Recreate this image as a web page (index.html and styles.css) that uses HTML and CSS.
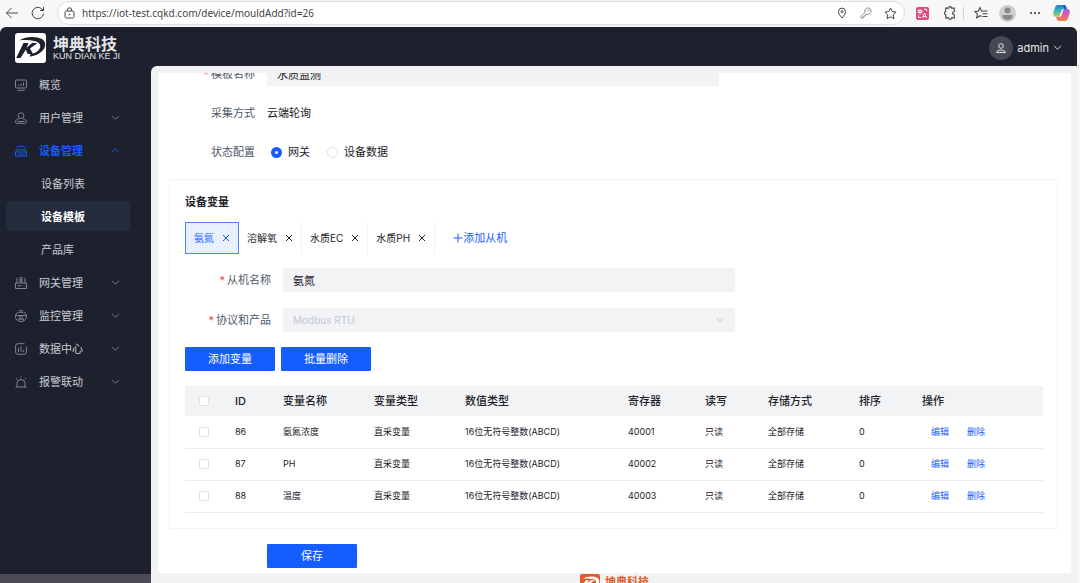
FILE: index.html
```html
<!DOCTYPE html>
<html lang="zh-CN">
<head>
    <meta charset="UTF-8">
    <meta name="viewport" content="width=device-width, initial-scale=1.0">
    <title>设备模板</title>
    <link rel="stylesheet" href="styles.css">
</head>
<body>
    <!-- Shared shapes -->
    <svg class="defs" aria-hidden="true">
        <symbol id="down" viewBox="0 0 10 10"><path d="M1.2 3.2 5 7l3.8-3.8"/></symbol>
        <symbol id="up" viewBox="0 0 10 10"><path d="M1.2 6.8 5 3l3.8 3.8"/></symbol>
        <symbol id="close" viewBox="0 0 8 8"><path d="m1 1 6 6M7 1 1 7"/></symbol>
        <symbol id="mark" viewBox="0 0 31 30">
            <path d="M4 7.500C11 3 21 3 27 6c5.500 3.500 3.500 11-3 14.500-3 1.800-6 2.700-9.500 3l1-2.300c4-.7 7.500-2.500 9.200-5.700 1.800-3.500-.5-6.700-5.700-7.500C15 7.200 9 6.500 4 7.500z"/>
            <path d="M8.500 10h5l-2 4.700L17 10h5.500L15 15.500l3 5.500h-5.300l-1.900-4.300L5.500 25H1.200z"/>
        </symbol>
    </svg>

    <!-- Browser bar -->
    <div class="browser">
        <button class="nav-btn" aria-label="后退"><svg width="14" height="14" viewBox="0 0 14 14"><path d="M13 7H1.500M6.500 2 1.500 7l5 5"/></svg></button>
        <button class="nav-btn" aria-label="刷新"><svg width="14" height="14" viewBox="0 0 14 14"><path d="M12.500 7.500A5.700 5.700 0 1 1 10.800 3L12.500 4.500M12.500 1v3.500H9"/></svg></button>
        <div class="address">
            <svg width="11" height="12" viewBox="0 0 11 12"><rect x="1" y="4" width="9" height="7" rx="1.500"/><path d="M3.300 4V3a2.200 2.200 0 0 1 4.400 0v1"/><circle cx="5.500" cy="7.500" r=".5"/></svg>
            <input type="text" aria-label="地址" value="https://iot-test.cqkd.com/device/mouldAdd?id=26">
            <button aria-label="位置"><svg width="10" height="12" viewBox="0 0 10 12"><path d="M5 11C3 8.700 1.500 6.800 1.500 4.600a3.500 3.500 0 0 1 7 0C8.500 6.800 7 8.700 5 11z"/><circle cx="5" cy="4.600" r="1"/></svg></button>
            <button aria-label="密码"><svg class="faint" width="12" height="12" viewBox="0 0 12 12"><path d="M5 5.500A3.200 3.200 0 1 1 7 7.200L6 8H5v1H4v1H3v1H1V9.500z"/><circle cx="8.700" cy="3.300" r=".4"/></svg></button>
            <button aria-label="收藏"><svg width="13" height="13" viewBox="0 0 13 13"><path d="m6.500 1 1.700 3.600 3.900.5-2.800 2.700.7 3.900-3.500-1.900L3 11.700l.7-3.900L.9 5.100l3.900-.5z"/></svg></button>
        </div>
        <div class="tools">
            <button aria-label="翻译">
                <svg width="13" height="13" viewBox="0 0 13 13"><rect width="13" height="13" rx="2" fill="#e2497f" stroke="none"/><g stroke="#fff"><path d="M2 3.500h4v2H2zM4 2v5.500M6.500 11l2-5 2 5M7.300 9.500h2.400M8 2.200h2.500v2M2.500 8.500v2H5"/></g></svg>
            </button>
            <button aria-label="扩展"><svg width="14" height="14" viewBox="0 0 13 13"><path d="M2.500 2h2.700a1.400 1.400 0 0 1 2.800 0h2.500v3a.6.600 0 0 1-.6.600 1.100 1.100 0 0 0 0 2.200.6.600 0 0 1 .6.600V11H8a1.400 1.400 0 0 1-2.800 0H2.500V7.900a1.300 1.300 0 0 1 0-2.600z"/></svg></button>
            <span class="sep"></span>
            <button aria-label="收藏夹"><svg width="14" height="14" viewBox="0 0 13 13"><path d="M7 9.800 5.500 9 2.500 11l.6-3.600L.8 5.200 4 4.700 5.500 1.500 7 4.700h5.500M8 7.200h4.500M8 9.700h4.500"/></svg></button>
            <button aria-label="个人资料"><svg class="solid" width="17" height="17" viewBox="0 0 17 17"><circle cx="8.500" cy="8.500" r="8.500" fill="#cfcdcb"/><circle cx="8.500" cy="5.500" r="3" fill="#8a8886"/><path d="M3.500 10h10v1.200c0 5-10 5-10 0z" fill="#8a8886"/></svg></button>
            <button aria-label="更多"><svg class="solid" width="12" height="4" viewBox="0 0 12 4"><g fill="#333"><circle cx="2" cy="2" r="1"/><circle cx="6" cy="2" r="1"/><circle cx="10" cy="2" r="1"/></g></svg></button>
            <button aria-label="Copilot">
                <svg class="solid" width="17" height="16" viewBox="0 0 17 16">
                    <defs>
                        <linearGradient id="cool" x1="0" y1="0" x2="0" y2="1"><stop offset="0" stop-color="#1c7fd8"/><stop offset=".5" stop-color="#2fb9c6"/><stop offset="1" stop-color="#e3c936"/></linearGradient>
                        <linearGradient id="warm" x1="0" y1="0" x2="0" y2="1"><stop offset="0" stop-color="#9c5ae8"/><stop offset=".5" stop-color="#e75a9c"/><stop offset="1" stop-color="#f58547"/></linearGradient>
                    </defs>
                    <path d="M5 0h6c1.500 0 2 1 2.400 2.500L13.700 4H11C9 4 8.500 5 8 7l-1 3c-.5 1.500-1 2-2.500 2H3C.5 12-.2 10 .4 7.500L2 2.500C2.600.8 3.500 0 5 0z" fill="url(#cool)"/>
                    <path d="M12 16H6c-1.500 0-2-1-2.400-2.500L3.300 12H6c2 0 2.500-1 3-3l1-3c.5-1.500 1-2 2.500-2H14c2.500 0 3.200 2 2.600 4.500l-1.600 5c-.6 1.700-1.500 2.500-3 2.500z" fill="url(#warm)"/>
                    <path d="M10 0h1c1.500 0 2 1 2.400 2.500l.3 1.500H11z" fill="#2359c4"/>
                </svg>
            </button>
        </div>
    </div>

    <div class="app">
        <header class="header">
            <div class="brand">
                <svg class="brand-mark" width="31" height="30"><use href="#mark"/></svg>
                <div class="brand-text">
                    <span class="brand-cn">坤典科技</span>
                    <span class="brand-en">KUN DIAN KE JI</span>
                </div>
            </div>
            <button class="user">
                <span class="avatar"><svg width="12" height="12" viewBox="0 0 12 12"><circle cx="6" cy="4" r="2.300"/><path d="M1.500 10.500c0-3.200 9-3.200 9 0z"/></svg></span>
                admin
                <svg width="9" height="9"><use href="#down"/></svg>
            </button>
        </header>

        <div class="body">
            <nav class="sidebar">
                <button class="menu-item">
                    <svg width="12" height="12" viewBox="0 0 12 12"><rect x=".5" y="1" width="11" height="8" rx="1"/><path d="M3.500 5.500V7M6 4.500V7M8.500 3.500V7M2.500 11.300h7"/></svg>
                    <span>概览</span>
                </button>
                <button class="menu-item">
                    <svg width="12" height="12" viewBox="0 0 12 12"><circle cx="6" cy="3.700" r="2.900"/><path d="M4 6.800C1.500 7.200.5 8.500.5 10c0 1 .5 1.300 1.300 1.300h8.400c.8 0 1.300-.3 1.300-1.300 0-1.500-1-2.800-3.500-3.200M2.500 9.500h7"/></svg>
                    <span>用户管理</span>
                    <svg class="arrow" width="9" height="9"><use href="#down"/></svg>
                </button>
                <button class="menu-item open">
                    <svg width="12" height="12" viewBox="0 0 12 12"><path d="M1.500 3c2-2.300 7-2.300 9 0M2 4.700h8L11.500 7v4H.5V7zM.5 7h11M2.700 9.200h1.600M5.500 8.300v1.800M7.200 9.200h2.300"/></svg>
                    <span>设备管理</span>
                    <svg class="arrow" width="9" height="9"><use href="#up"/></svg>
                </button>
                <button class="menu-item sub"><span>设备列表</span></button>
                <button class="menu-item sub active"><span>设备模板</span></button>
                <button class="menu-item sub"><span>产品库</span></button>
                <button class="menu-item">
                    <svg width="12" height="12" viewBox="0 0 12 12"><path d="M.5 6h11v5.500H.5zM2 6V.8M10 6V.8M4 .8h4M4.500 2.500h3M6 2.500V6M4 4h4M2.500 8.800h4M8.500 8.800h1"/></svg>
                    <span>网关管理</span>
                    <svg class="arrow" width="9" height="9"><use href="#down"/></svg>
                </button>
                <button class="menu-item">
                    <svg width="12" height="12" viewBox="0 0 12 12"><path d="M4 .7h4M3.500 2.300h5M.5 5.500h11M3 2.300C-.3 4-.3 8 2 10c2 2 6 2 8 0s2.300-6-1-7.700M3.500 10.500V9h5v1.500"/><circle cx="6" cy="7.300" r="1.500"/></svg>
                    <span>监控管理</span>
                    <svg class="arrow" width="9" height="9"><use href="#down"/></svg>
                </button>
                <button class="menu-item">
                    <svg width="12" height="12" viewBox="0 0 12 12"><path d="M9.500.7H3A2.300 2.300 0 0 0 .6 3v6A2.300 2.300 0 0 0 3 11.300h6A2.300 2.300 0 0 0 11.400 9V3.500M3.500 5v4M6 3.500V9M8.300 7v2"/></svg>
                    <span>数据中心</span>
                    <svg class="arrow" width="9" height="9"><use href="#down"/></svg>
                </button>
                <button class="menu-item">
                    <svg width="12" height="12" viewBox="0 0 12 12"><path d="M.5 11h11M2 11V7.500a4 4 0 0 1 8 0V11M6 .5v1.300M1 2.300l1.300 1.200M11 2.300 9.700 3.500"/></svg>
                    <span>报警联动</span>
                    <svg class="arrow" width="9" height="9"><use href="#down"/></svg>
                </button>
                <div class="sidebar-foot"></div>
            </nav>

            <main class="main">
                <div class="panel">
                    <form class="form scrolled">
                        <div class="row">
                            <label for="tplName" class="required">模板名称</label>
                            <input type="text" id="tplName" class="field" value="水质监测" readonly>
                        </div>
                        <div class="row">
                            <span class="label">采集方式</span>
                            <span class="value">云端轮询</span>
                        </div>
                        <div class="row">
                            <span class="label">状态配置</span>
                            <div class="radios">
                                <label><input type="radio" name="status" checked>网关</label>
                                <label><input type="radio" name="status">设备数据</label>
                            </div>
                        </div>
                    </form>

                    <!-- Device variables -->
                    <section class="card">
                        <h2>设备变量</h2>
                        <div class="tabs">
                            <button class="tab current">氨氮<svg width="8" height="8"><use href="#close"/></svg></button>
                            <button class="tab">溶解氧<svg width="8" height="8"><use href="#close"/></svg></button>
                            <button class="tab">水质EC<svg width="8" height="8"><use href="#close"/></svg></button>
                            <button class="tab">水质PH<svg width="8" height="8"><use href="#close"/></svg></button>
                            <button class="add"><svg width="10" height="10" viewBox="0 0 10 10"><path d="M5 .5v9M.5 5h9"/></svg>添加从机</button>
                        </div>
                        <div class="form slave">
                            <div class="row">
                                <label for="slaveName" class="required">从机名称</label>
                                <input type="text" id="slaveName" class="field" value="氨氮" readonly>
                            </div>
                            <div class="row">
                                <label for="protocol" class="required">协议和产品</label>
                                <div class="select">
                                    <select id="protocol" class="field" disabled><option>Modbus RTU</option></select>
                                    <svg width="8" height="8"><use href="#down"/></svg>
                                </div>
                            </div>
                        </div>
                        <div class="actions">
                            <button class="btn">添加变量</button>
                            <button class="btn">批量删除</button>
                        </div>
                        <table class="table">
                            <thead>
                                <tr>
                                    <th class="c-check"><input type="checkbox" aria-label="全选"></th>
                                    <th class="c-id">ID</th>
                                    <th class="c-name">变量名称</th>
                                    <th class="c-name">变量类型</th>
                                    <th class="c-value">数值类型</th>
                                    <th class="c-reg">寄存器</th>
                                    <th class="c-short">读写</th>
                                    <th class="c-name">存储方式</th>
                                    <th class="c-short">排序</th>
                                    <th class="c-ops">操作</th>
                                </tr>
                            </thead>
                            <tbody>
                                <tr>
                                    <td class="c-check"><input type="checkbox" aria-label="选择 86"></td>
                                    <td>86</td><td>氨氮浓度</td><td>直采变量</td><td>16位无符号整数(ABCD)</td>
                                    <td>40001</td><td>只读</td><td>全部存储</td><td>0</td>
                                    <td class="ops"><a href="#">编辑</a><a href="#">删除</a></td>
                                </tr>
                                <tr>
                                    <td class="c-check"><input type="checkbox" aria-label="选择 87"></td>
                                    <td>87</td><td>PH</td><td>直采变量</td><td>16位无符号整数(ABCD)</td>
                                    <td>40002</td><td>只读</td><td>全部存储</td><td>0</td>
                                    <td class="ops"><a href="#">编辑</a><a href="#">删除</a></td>
                                </tr>
                                <tr>
                                    <td class="c-check"><input type="checkbox" aria-label="选择 88"></td>
                                    <td>88</td><td>温度</td><td>直采变量</td><td>16位无符号整数(ABCD)</td>
                                    <td>40003</td><td>只读</td><td>全部存储</td><td>0</td>
                                    <td class="ops"><a href="#">编辑</a><a href="#">删除</a></td>
                                </tr>
                            </tbody>
                        </table>
                    </section>

                    <div class="save">
                        <button class="btn">保存</button>
                    </div>
                </div>

                <footer class="footer">
                    <svg class="footer-mark" width="20" height="19"><use href="#mark"/></svg>
                    <span>坤典科技</span>
                </footer>
            </main>
        </div>
    </div>
</body>
</html>
```

FILE: styles.css
```css
* {
    box-sizing: border-box;
}

body {
    margin: 0;
    height: 100vh;
    display: flex;
    flex-direction: column;
    overflow: hidden;
    background: #f7f7f7;
    color: #1d2129;
    font-family: Inter, "Noto Sans CJK SC", sans-serif;
    font-size: 10px;
    line-height: 16px;
}

button,
input,
select {
    margin: 0;
    padding: 0;
    border: none;
    background: none;
    color: inherit;
    font: inherit;
}

button {
    cursor: pointer;
}

svg {
    flex: none;
    display: block;
    fill: none;
    stroke: currentColor;
}

.solid {
    stroke: none;
}

.defs {
    position: absolute;
    width: 0;
    height: 0;
}

/* Browser bar */
.browser {
    display: flex;
    height: 27px;
    padding: 1px 4px 2px 0;
    color: #444;
}

.nav-btn {
    width: 27px;
    display: flex;
    justify-content: center;
    align-items: center;
}

.nav-btn:first-child {
    width: 24px;
}

.address {
    flex: 1;
    display: flex;
    align-items: center;
    margin: 0 4px 0 6px;
    padding: 0 2px 0 6px;
    background: white;
    border: 1px solid #dedede;
    border-radius: 12px;
}

.address input {
    flex: 1;
    margin-left: 7px;
    font-family: "Noto Sans", sans-serif;
    font-size: 10px;
}

.address button {
    width: 24px;
    height: 20px;
    display: flex;
    justify-content: center;
    align-items: center;
}

.faint {
    color: #8a8a8a;
}

.tools {
    display: flex;
    align-items: center;
    padding-right: 1px;
}

.tools button {
    width: 27px;
    display: flex;
    justify-content: center;
}

.sep {
    width: 4px;
    height: 12px;
    border-left: 1px solid #d0d0d0;
}

/* App shell */
.app {
    flex: 1;
    min-height: 0;
    display: flex;
    flex-direction: column;
    margin-right: 3px;
    background: #1d202d;
    border-radius: 6px 6px 0 0;
}

.header {
    flex: none;
    height: 39px;
    display: flex;
    justify-content: space-between;
    align-items: center;
    padding: 2px 15px 0;
    color: #e4e5e8;
}

.brand {
    display: flex;
    align-items: center;
    gap: 7px;
}

.brand-mark {
    background: white;
    border-radius: 3px;
    fill: #1d202d;
    stroke: none;
}

.brand-text {
    display: flex;
    flex-direction: column;
    padding-top: 2px;
}

.brand-cn {
    font-size: 16px;
    font-weight: bold;
    line-height: 16px;
}

.brand-en {
    font-family: "Liberation Sans", sans-serif;
    font-size: 9px;
    line-height: 9px;
}

.user {
    display: flex;
    align-items: center;
    gap: 4px;
    font-size: 11px;
}

.avatar {
    width: 24px;
    height: 24px;
    display: flex;
    justify-content: center;
    align-items: center;
    border-radius: 50%;
    background: #464852;
}

.body {
    flex: 1;
    min-height: 0;
    display: flex;
}

.sidebar {
    flex: none;
    width: 151px;
    display: flex;
    flex-direction: column;
    gap: 3px;
    padding-top: 3px;
}

.menu-item {
    height: 30px;
    display: flex;
    align-items: center;
    gap: 12px;
    margin: 0 21px 0 6px;
    padding: 1px 10px 0 9px;
    border-radius: 3px;
    color: #c9ccd3;
    font-size: 11px;
    text-align: left;
}

.menu-item svg {
    color: #80848f;
}

.menu-item .arrow {
    margin-left: auto;
}

.menu-item.open,
.menu-item.open svg {
    color: #165dff;
}

.menu-item.open {
    font-weight: bold;
}

.menu-item.sub {
    padding-left: 35px;
}

.menu-item.active {
    background: #242b3d;
    color: white;
    font-weight: bold;
}

.sidebar-foot {
    height: 9px;
    margin-top: auto;
    background: #4a4b56;
}

.main {
    flex: 1;
    min-width: 0;
    overflow: hidden;
    padding: 7px 6px 0 7px;
    background: #f2f2f2;
    border-top-left-radius: 6px;
}

.panel {
    overflow: hidden;
    padding: 0 13px 5px 11px;
    background: white;
    border-radius: 2px;
}

/* Forms */
.form {
    display: flex;
    flex-direction: column;
    gap: 15px;
}

.scrolled {
    margin: -11px 0 15px;
}

.slave {
    gap: 16px;
}

.row {
    height: 24px;
    display: flex;
    align-items: center;
    gap: 12px;
}

.row > label,
.label {
    flex: none;
    width: 86px;
    color: #4e5969;
    font-size: 11px;
    text-align: right;
}

.required::before {
    content: "*";
    margin-right: 2px;
    color: #f53f3f;
}

.value,
.radios {
    font-size: 11px;
}

.field {
    width: 100%;
    max-width: 452px;
    height: 24px;
    padding: 0 10px;
    background: #f2f3f5;
    color: #1d2129;
    font-size: 11px;
}

.select {
    flex: 1;
    max-width: 452px;
    position: relative;
    color: #b4b9c2;
}

.select select {
    display: block;
    appearance: none;
    color: #c3c8d0;
    font-size: 10px;
    opacity: 1;
}

.select svg {
    position: absolute;
    right: 11px;
    top: 8px;
}

.radios {
    display: flex;
    gap: 17px;
    padding-left: 4px;
}

.radios label {
    display: flex;
    align-items: center;
    gap: 6px;
}

.radios input {
    appearance: none;
    width: 11px;
    height: 11px;
    border: 1px solid #dcdfe5;
    border-radius: 50%;
}

.radios input:checked {
    border: 4px solid #165dff;
}

/* Card */
.card {
    padding: 14px 15px 15px;
    border: 1px solid #f4f4f5;
}

.card h2 {
    margin: 0 0 12px;
    font-size: 11px;
    font-weight: bold;
    line-height: 16px;
}

.tabs {
    display: flex;
    margin-bottom: 14px;
}

.tab {
    height: 32px;
    display: flex;
    align-items: center;
    gap: 8px;
    padding: 0 8px;
    border-right: 1px solid #f4f4f5;
}

.tab.current {
    border: 1px solid #4d85ff;
    background: #e8f0ff;
    color: #165dff;
}

.add {
    display: flex;
    align-items: center;
    margin-left: 18px;
    color: #165dff;
    font-size: 11px;
}

.actions {
    display: flex;
    gap: 6px;
    margin: 15px 0;
}

.btn {
    width: 90px;
    height: 24px;
    border-radius: 1px;
    background: #165dff;
    color: white;
    font-size: 11px;
}

.btn:hover {
    background: #4080ff;
}

.table {
    width: 100%;
    table-layout: fixed;
    border-collapse: collapse;
}

.table th {
    height: 30px;
    padding: 0 0 0 9px;
    background: #f2f3f5;
    font-size: 11px;
    font-weight: 500;
    text-align: left;
}

.table td {
    height: 32px;
    padding: 0 0 0 9px;
    border-bottom: 1px solid #e9ebee;
    font-size: 9px;
    white-space: nowrap;
}

.table input {
    appearance: none;
    display: block;
    width: 10px;
    height: 10px;
    border: 1px solid #dfe2e8;
    border-radius: 1px;
    background: white;
}

.table .c-check {
    width: 41px;
    padding-left: 14px;
}

.c-id {
    width: 48px;
}

.c-name {
    width: 91px;
}

.c-value {
    width: 163px;
}

.c-reg {
    width: 77px;
}

.c-short {
    width: 63px;
}

.c-ops {
    width: 130px;
}

.ops a {
    margin-left: 9px;
    margin-right: 9px;
    color: #165dff;
    text-decoration: none;
}

.save {
    margin-top: 15px;
    padding-left: 98px;
}

/* Footer */
.footer {
    display: flex;
    justify-content: center;
    gap: 5px;
    margin-top: 1px;
    color: #e05a2b;
    font-size: 11px;
    font-weight: bold;
}

.footer-mark {
    background: #e05a2b;
    border-radius: 2px;
    fill: white;
    stroke: none;
}
```
